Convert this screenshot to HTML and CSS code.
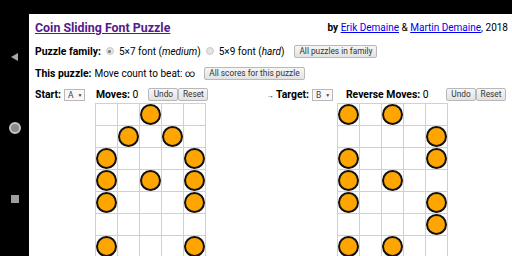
FILE: index.html
```html
<!DOCTYPE html>
<html>
<head>
  <title>Coin Sliding Font Puzzle</title>
  <link rel="stylesheet" href="styles.css">
</head>
<body>
  <div class="screen">
    <nav class="sysnav">
      <svg class="nav-back" width="7" height="8" viewBox="0 0 7 8"><polygon points="7,0 7,8 0,4" fill="#a8a8a8"/></svg>
      <span class="nav-home"></span>
      <span class="nav-recent"></span>
    </nav>
    <div class="viewport">
      <div class="statusbar"></div>
      <main class="page">
        <div class="titlebar">
          <a class="title" href="#">Coin Sliding Font Puzzle</a>
          <span class="byline"><b>by</b> <a href="#">Erik Demaine</a> &amp; <a href="#">Martin Demaine</a>, 2018</span>
        </div>
        <div class="row">
          <b class="label">Puzzle family:</b>
          <label class="choice"><span class="radio checked"></span><span>5×7 font (<i>medium</i>)</span></label>
          <label class="choice"><span class="radio"></span><span>5×9 font (<i>hard</i>)</span></label>
          <button class="btn btn-family">All puzzles in family</button>
        </div>
        <div class="row">
          <b class="label label-tight">This puzzle:</b>
          <span class="plain">Move count to beat: ∞</span>
          <button class="btn btn-scores">All scores for this puzzle</button>
        </div>
        <div class="boards">
          <section class="board board-start">
            <div class="board-head">
              <b>Start:</b>
              <span class="select">A <span class="caret">▼</span></span>
              <span class="moves"><b>Moves:</b> 0</span>
              <span class="btn-pair"><button class="btn">Undo</button><button class="btn">Reset</button></span>
            </div>
            <div class="grid" id="start-grid"></div>
          </section>
          <section class="board board-target">
            <div class="board-head">
              <span class="arrow">→</span>
              <b>Target:</b>
              <span class="select">B <span class="caret">▼</span></span>
              <span class="moves"><b>Reverse Moves:</b> 0</span>
              <span class="btn-pair"><button class="btn">Undo</button><button class="btn">Reset</button></span>
            </div>
            <div class="grid" id="target-grid"></div>
          </section>
        </div>
      </main>
    </div>
  </div>

  <script>
    // 5x7 font glyphs, o = coin
    const glyphA = ['..o..', '.o.o.', 'o...o', 'o.o.o', 'o...o', '.....', 'o...o'];
    const glyphB = ['o.o..', '....o', 'o...o', 'o.o..', 'o...o', '....o', 'o.o..'];

    function drawGrid(id, rows) {
      const grid = document.getElementById(id);
      rows.forEach(row => {
        for (const ch of row) {
          const cell = document.createElement('div');
          cell.className = 'cell';
          if (ch === 'o') {
            const coin = document.createElement('div');
            coin.className = 'coin';
            cell.appendChild(coin);
          }
          grid.appendChild(cell);
        }
      });
    }

    drawGrid('start-grid', glyphA);
    drawGrid('target-grid', glyphB);
  </script>
</body>
</html>
```

FILE: styles.css
```css
/* Coin sliding puzzle page, phone landscape */
body {
  margin: 0;
  background: #000;
  font-family: Roboto, "Liberation Sans", sans-serif;
  font-size: 10.4px;
  color: #000;
}
.screen {
  display: flex;
  width: 512px;
  height: 256px;
  overflow: hidden;
}

/* android nav bar */
.sysnav {
  width: 29px;
  flex: none;
  display: flex;
  flex-direction: column;
  align-items: center;
  justify-content: center;
  gap: 61px;
  background: #000;
}
.nav-back {
  display: block;
}
.nav-home {
  width: 12px;
  height: 12px;
  border-radius: 50%;
  box-sizing: border-box;
  border: 2px solid #c4c4c4;
  background: #8a8a8a;
}
.nav-recent {
  width: 8px;
  height: 8px;
  background: #9e9e9e;
}

.viewport {
  flex: 1;
  display: flex;
  flex-direction: column;
}
.statusbar {
  height: 14px;
  flex: none;
  background: #000;
}
.page {
  flex: 1;
  background: #fff;
  padding: 0 4px 0 6px;
}

a {
  color: #0000ee;
}
.titlebar {
  height: 26px;
  display: flex;
  align-items: center;
  justify-content: space-between;
}
.title {
  font-size: 12.4px;
  font-weight: bold;
  color: #551a8b;
}
.byline {
  font-size: 10px;
}

.row {
  height: 22px;
  display: flex;
  align-items: center;
  white-space: nowrap;
}
.row .label {
  margin-right: 5px;
}
.row .label-tight {
  margin-right: 3px;
}
.plain {
  font-size: 10px;
}
.choice {
  display: flex;
  align-items: center;
  margin-right: 5px;
  font-size: 10px;
}
.radio {
  width: 8px;
  height: 8px;
  box-sizing: border-box;
  border-radius: 50%;
  border: 1px solid #c8c8c8;
  background: #e4e4e4;
  margin: 0 5px 0 0;
  position: relative;
}
.radio.checked::after {
  content: "";
  position: absolute;
  left: 1.5px;
  top: 1.5px;
  width: 3px;
  height: 3px;
  border-radius: 50%;
  background: #777;
}

.btn {
  font-family: Roboto, "Liberation Sans", sans-serif;
  font-size: 8.3px;
  height: 13px;
  padding: 0 4px;
  color: #333;
  background: linear-gradient(#f6f6f6, #e2e2e2);
  border: 1px solid #b8b8b8;
  border-radius: 2px;
  line-height: 11px;
}
.btn-family {
  margin-left: 5px;
}
.btn-scores {
  margin-left: 9px;
}

.boards {
  display: flex;
  margin-top: 2px;
}
.board-start {
  width: 232px;
  flex: none;
}
.board-target {
  flex: 1;
  padding-right: 2px;
}
.board-head {
  height: 17px;
  display: flex;
  align-items: center;
  white-space: nowrap;
}
.select {
  display: inline-flex;
  align-items: center;
  height: 12px;
  width: 21px;
  box-sizing: border-box;
  margin-left: 3px;
  padding-left: 3px;
  font-size: 8.5px;
  color: #444;
  background: #f8f8f8;
  border: 1px solid #b8b8b8;
}
.caret {
  font-size: 5px;
  margin-left: 4px;
}
.moves {
  margin-left: 11px;
}
.btn-pair {
  display: flex;
  margin-left: 10px;
}
.btn-pair .btn {
  width: 30px;
  padding: 0;
}
.board-target .moves {
  margin-left: 13px;
}
.board-target .btn-pair {
  margin-left: auto;
}
.arrow {
  font-size: 7px;
  margin-right: 2px;
  padding-top: 3px;
}

.grid {
  display: grid;
  grid-template-columns: repeat(5, 22px);
  grid-auto-rows: 22px;
  width: 110px;
  border-left: 1px solid #d0d0d0;
  border-top: 1px solid #d0d0d0;
  margin-left: 60px;
}
.board-target .grid {
  margin-left: 70px;
}
.cell {
  box-sizing: border-box;
  border-right: 1px solid #d0d0d0;
  border-bottom: 1px solid #d0d0d0;
}
.coin {
  width: 21px;
  height: 21px;
  box-sizing: border-box;
  border-radius: 50%;
  border: 2px solid #111;
  background: #ffa500;
}
```
